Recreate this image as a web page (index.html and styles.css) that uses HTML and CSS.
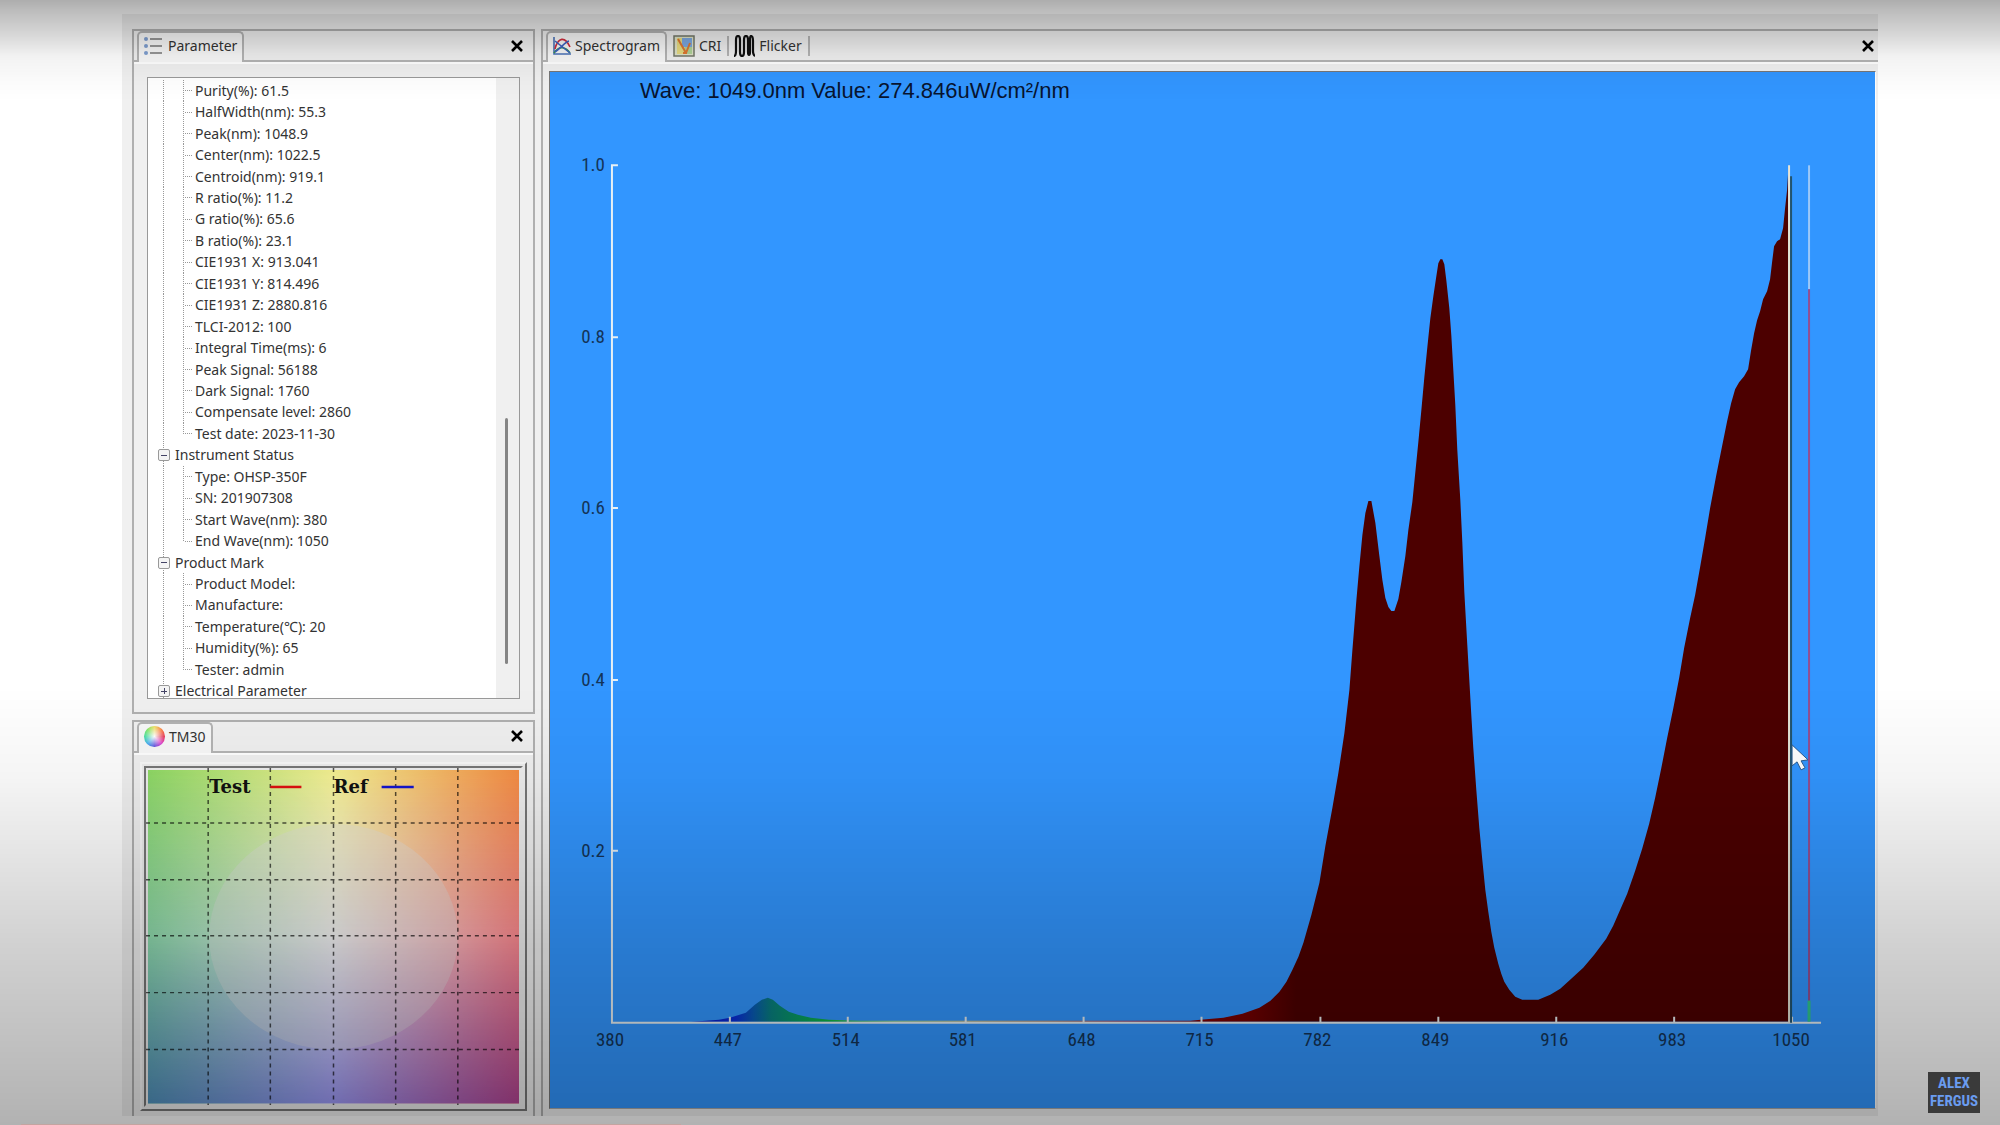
FILE: index.html
```html
<!DOCTYPE html>
<html lang="en">
<head>
    <meta charset="UTF-8">
    <meta name="viewport" content="width=device-width, initial-scale=1.0">
    <title>Spectrogram</title>
    <link rel="stylesheet" href="styles.css">
</head>
<body>
    <main class="window">
        <div class="sidebar">
            <section class="panel panel-parameter">
                <div class="tab-bar">
                    <button class="tab active" type="button">
                        <svg class="icon" width="18" height="18" viewBox="0 0 18 18">
                            <g fill="#7f9fd0"><circle cx="2" cy="2" r="2"/><circle cx="2" cy="9" r="2"/><circle cx="2" cy="16" r="2"/></g>
                            <path d="M6 2h12M6 9h12M6 16h12" stroke="#777" stroke-width="1.5"/>
                        </svg>
                        Parameter
                    </button>
                    <button class="close" type="button" aria-label="Close">
                        <svg width="12" height="12" viewBox="0 0 12 12"><path d="M1 1l10 10M11 1L1 11" stroke="#000" stroke-width="2.6"/></svg>
                    </button>
                </div>
                <div class="tree-box">
                    <ul class="tree">
                        <li class="leaf">Purity(%): 61.5</li>
                        <li class="leaf">HalfWidth(nm): 55.3</li>
                        <li class="leaf">Peak(nm): 1048.9</li>
                        <li class="leaf">Center(nm): 1022.5</li>
                        <li class="leaf">Centroid(nm): 919.1</li>
                        <li class="leaf">R ratio(%): 11.2</li>
                        <li class="leaf">G ratio(%): 65.6</li>
                        <li class="leaf">B ratio(%): 23.1</li>
                        <li class="leaf">CIE1931 X: 913.041</li>
                        <li class="leaf">CIE1931 Y: 814.496</li>
                        <li class="leaf">CIE1931 Z: 2880.816</li>
                        <li class="leaf">TLCI-2012: 100</li>
                        <li class="leaf">Integral Time(ms): 6</li>
                        <li class="leaf">Peak Signal: 56188</li>
                        <li class="leaf">Dark Signal: 1760</li>
                        <li class="leaf">Compensate level: 2860</li>
                        <li class="leaf last">Test date: 2023-11-30</li>
                        <li class="branch"><button class="toggle" type="button" aria-label="Collapse"></button>Instrument Status</li>
                        <li class="leaf">Type: OHSP-350F</li>
                        <li class="leaf">SN: 201907308</li>
                        <li class="leaf">Start Wave(nm): 380</li>
                        <li class="leaf last">End Wave(nm): 1050</li>
                        <li class="branch"><button class="toggle" type="button" aria-label="Collapse"></button>Product Mark</li>
                        <li class="leaf">Product Model:</li>
                        <li class="leaf">Manufacture:</li>
                        <li class="leaf">Temperature(℃): 20</li>
                        <li class="leaf">Humidity(%): 65</li>
                        <li class="leaf last">Tester: admin</li>
                        <li class="branch"><button class="toggle plus" type="button" aria-label="Expand"></button>Electrical Parameter</li>
                    </ul>
                    <div class="scrollbar"><div class="thumb"></div></div>
                </div>
            </section>

            <section class="panel panel-tm30">
                <div class="tab-bar">
                    <button class="tab active" type="button">
                        <span class="wheel"></span>
                        TM30
                    </button>
                    <button class="close" type="button" aria-label="Close">
                        <svg width="12" height="12" viewBox="0 0 12 12"><path d="M1 1l10 10M11 1L1 11" stroke="#000" stroke-width="2.6"/></svg>
                    </button>
                </div>
                <div class="tm30-frame">
                    <svg class="tm30" viewBox="0 0 374 338" preserveAspectRatio="none">
                        <defs>
                            <linearGradient id="rowTop"><stop offset="0" stop-color="#8fd964"/><stop offset=".5" stop-color="#f6f290"/><stop offset="1" stop-color="#f68e42"/></linearGradient>
                            <linearGradient id="rowMid"><stop offset="0" stop-color="#8fdcae"/><stop offset=".5" stop-color="#ffffff"/><stop offset="1" stop-color="#ff8c92"/></linearGradient>
                            <linearGradient id="rowBottom"><stop offset="0" stop-color="#4f90bd"/><stop offset=".5" stop-color="#9c98f8"/><stop offset="1" stop-color="#b44494"/></linearGradient>
                            <linearGradient id="fadeDown" x2="0" y2="1"><stop offset="0" stop-color="#fff"/><stop offset=".5" stop-color="#000"/></linearGradient>
                            <linearGradient id="fadeUp" x2="0" y2="1"><stop offset=".5" stop-color="#000"/><stop offset="1" stop-color="#fff"/></linearGradient>
                            <mask id="topMask"><rect width="374" height="338" fill="url(#fadeDown)"/></mask>
                            <mask id="bottomMask"><rect width="374" height="338" fill="url(#fadeUp)"/></mask>
                        </defs>
                        <g>
                            <rect x="2" y="2" width="370" height="334" fill="url(#rowMid)"/>
                            <rect x="2" y="2" width="370" height="334" fill="url(#rowTop)" mask="url(#topMask)"/>
                            <rect x="2" y="2" width="370" height="334" fill="url(#rowBottom)" mask="url(#bottomMask)"/>
                        </g>
                        <ellipse cx="187" cy="169" rx="124" ry="113" fill="#e2e2e2" opacity=".35"/>
                        <path class="grid" d="M62 0V338M124 0V338M187 0V338M249 0V338M311 0V338M0 55H374M0 112H374M0 168H374M0 225H374M0 282H374"/>
                        <path d="M124 19h31" stroke="#e01010" stroke-width="2.5"/>
                        <path d="M235 19h32" stroke="#1414d0" stroke-width="2.5"/>
                        <text class="legend" x="63" y="25">Test</text>
                        <text class="legend" x="187" y="25">Ref</text>
                    </svg>
                </div>
            </section>
        </div>

        <section class="panel panel-spectrum">
            <div class="tab-bar">
                <button class="tab active" type="button">
                    <svg class="icon" width="18" height="18" viewBox="0 0 18 18" fill="none" stroke-width="1.6">
                        <path d="M1 0V17H18" stroke="#4a72b8"/>
                        <path d="M1 16C6 8 13 10 17 16" stroke="#3c9a4a"/>
                        <path d="M2 12C5 0 12-1 17 10" stroke="#d02c3c"/>
                        <path d="M2 4L17 16M2 15C9 10 12 5 16 4" stroke="#3c62c0"/>
                    </svg>
                    Spectrogram
                </button>
                <button class="tab" type="button">
                    <svg class="icon" width="22" height="22" viewBox="0 0 22 22">
                        <rect x="1" y="1" width="20" height="20" fill="#dfe3c8" stroke="#74786a" stroke-width="1.5"/>
                        <path d="M4 3h7v8h8v8H4Z" fill="#e8dc80"/>
                        <rect x="9" y="3" width="10" height="9" fill="#7ca8e0"/>
                        <path d="M12 12h7v7h-9Z" fill="#b0d498"/>
                        <path d="M5 4l8 14M13 18l4-10M10 18h4" stroke="#e07830" stroke-width="2" fill="none"/>
                    </svg>
                    CRI
                </button>
                <button class="tab" type="button">
                    <svg class="icon" width="22" height="22" viewBox="0 0 22 22">
                        <path d="M1 21Q3 21 3 16V5Q3 1 5 1T7 5V17Q7 21 9 21T11 17V5Q11 1 13 1T15 5V17Q15 20 16 20T17 17V5Q17 1 18 1Q20 1 20 6V16Q20 20 22 21" fill="none" stroke="#111" stroke-width="2.2"/>
                    </svg>
                    Flicker
                </button>
                <button class="close" type="button" aria-label="Close">
                    <svg width="12" height="12" viewBox="0 0 12 12"><path d="M1 1l10 10M11 1L1 11" stroke="#000" stroke-width="2.6"/></svg>
                </button>
            </div>
            <div class="chart-frame">
                <svg class="chart" viewBox="549 72 1326 1036">
                    <defs>
                        <linearGradient id="spectrum" gradientUnits="userSpaceOnUse" x1="611" y1="0" x2="1791" y2="0">
                            <stop offset=".08" stop-color="#0a1ec8"/>
                            <stop offset=".105" stop-color="#0a30d8"/>
                            <stop offset=".12" stop-color="#0a5cb4"/>
                            <stop offset=".135" stop-color="#088080"/>
                            <stop offset=".16" stop-color="#08a060"/>
                            <stop offset=".185" stop-color="#10b840"/>
                            <stop offset=".24" stop-color="#a0d878"/>
                            <stop offset=".3" stop-color="#d8c070"/>
                            <stop offset=".37" stop-color="#d08850"/>
                            <stop offset=".44" stop-color="#a83050"/>
                            <stop offset=".5" stop-color="#800000"/>
                            <stop offset=".54" stop-color="#740000"/>
                            <stop offset=".58" stop-color="#4c0000"/>
                        </linearGradient>
                    </defs>
                    <text class="readout" x="639" y="98">Wave: 1049.0nm Value: 274.846uW/cm²/nm</text>

                    <path fill="url(#spectrum)" d="M690 1022L705 1021 718 1020 729 1018 745 1013 754 1005 761 1000 767 998 772 1000 779 1006 788 1012 797 1015 810 1018 828 1020 860 1021 1190 1021
                        1200 1020 1223 1018 1242 1014 1259 1008 1270 1001 1279 992 1286 982 1292 970 1298 957 1303 943 1311 915 1319 883 1325 846 1332 808 1338 773 1344 733 1349 690 1352 650 1356 600
                        1359 566 1362 535 1365 513 1368 501 1371 501 1375 523 1379 556 1382 580 1385 598 1388 607 1391 611 1394 611 1398 599 1401 582 1405 556 1408 530 1412 502 1415 472 1418 442
                        1421 410 1424 377 1427 347 1430 318 1433 296 1436 276 1438 263 1440 259 1442 259 1444 264 1446 280 1449 308 1451 335 1453 370 1455 405 1457 450 1460 500 1462 542 1464 592
                        1467 645 1469 680 1471 715 1473 748 1476 790 1479 828 1482 860 1485 890 1488 912 1491 932 1494 948 1498 964 1501 974 1504 982 1509 990 1515 997 1522 1000 1538 1000
                        1550 995 1560 989 1571 979 1583 968 1594 955 1606 939 1613 926 1620 910 1627 894 1635 871 1642 849 1649 824 1655 798 1661 769 1667 738 1673 709 1679 678 1684 648
                        1690 618 1695 595 1700 567 1705 538 1710 508 1716 476 1722 446 1727 421 1731 403 1735 389 1739 382 1744 376 1748 369 1751 350 1754 333 1757 320 1760 311 1763 299 1767 291
                        1770 279 1772 262 1774 246 1777 241 1780 239 1783 228 1785 208 1787 190 1788 173V1022Z"/>

                    <g class="axis">
                        <path d="M617 165H611V1023H1821"/>
                        <path d="M611 337h6M611 508h6M611 680h6M611 851h6"/>
                        <path d="M729 1023v-6M847 1023v-6M965 1023v-6M1083 1023v-6M1201 1023v-6M1320 1023v-6M1438 1023v-6M1556 1023v-6M1674 1023v-6M1792 1023v-6"/>
                    </g>
                    <path d="M1789 165V1023" stroke="#e8e4d4" stroke-width="2"/>
                    <path d="M1791 176V1023" stroke="#24546c" stroke-width="2"/>
                    <path d="M1809 165V289" stroke="#9cc8f8" stroke-width="2"/>
                    <path d="M1809 289V1001" stroke="#944e90" stroke-width="2"/>
                    <path d="M1809 1001V1022" stroke="#30c890" stroke-width="3"/>

                    <g class="y-labels">
                        <text x="604" y="171">1.0</text>
                        <text x="604" y="343">0.8</text>
                        <text x="604" y="514">0.6</text>
                        <text x="604" y="686">0.4</text>
                        <text x="604" y="857">0.2</text>
                    </g>
                    <g class="x-labels">
                        <text x="609" y="1046">380</text>
                        <text x="727" y="1046">447</text>
                        <text x="845" y="1046">514</text>
                        <text x="962" y="1046">581</text>
                        <text x="1081" y="1046">648</text>
                        <text x="1199" y="1046">715</text>
                        <text x="1317" y="1046">782</text>
                        <text x="1435" y="1046">849</text>
                        <text x="1554" y="1046">916</text>
                        <text x="1672" y="1046">983</text>
                        <text x="1791" y="1046">1050</text>
                    </g>
                    <path d="M1792 745v21l5-4 4 8 4-2-4-7 7-1Z" fill="#fff" stroke="#2c5c90"/>
                </svg>
            </div>
        </section>
    </main>

    <div class="shade"></div>
    <div class="progress"></div>
    <div class="watermark">ALEX<br>FERGUS</div>
</body>
</html>
```
FILE: styles.css
```css
* {
    margin: 0;
    padding: 0;
    box-sizing: border-box;
}
body {
    height: 100vh;
    padding: 14px 122px 9px;
    background: #fff;
    color: #333;
    font-family: 'Noto Sans', 'Noto Sans CJK SC', sans-serif;
    font-size: 14px;
    overflow: hidden;
}
button {
    font: inherit;
    color: inherit;
    background: none;
    border: none;
}
.window {
    display: flex;
    gap: 6px;
    height: 100%;
    padding: 15px 0 0 10px;
    background: #f0f0f0;
}
.sidebar {
    display: flex;
    flex-direction: column;
    gap: 6px;
    width: 403px;
}
.panel {
    display: flex;
    flex-direction: column;
    border: 2px solid #b0b0b0;
}
.panel-parameter {
    flex: 685;
    min-height: 0;
}
.panel-tm30 {
    flex: 397;
    min-height: 0;
    border-bottom: none;
}
.panel-spectrum {
    flex: 1;
    min-width: 0;
    border-right: none;
    border-bottom: none;
}

/* tabs */
.tab-bar {
    display: flex;
    align-items: center;
    height: 31px;
    flex-shrink: 0;
    padding: 0 10px 0 3px;
    border-bottom: 2px solid #b4b4b4;
    box-shadow: 0 2px 0 #fff;
}
.tab {
    display: flex;
    align-items: center;
    gap: 4px;
    height: 20px;
    padding: 0 6px 0 4px;
    border-right: 2px solid #b4b4b4;
}
.tab.active {
    height: 31px;
    margin-bottom: -2px;
    padding: 0 5px 4px;
    background: #f8f8f8;
    border: 2px solid #b4b4b4;
    border-bottom: none;
    border-radius: 5px 5px 0 0;
}
.tab.active + .tab {
    padding-left: 6px;
}
.panel-parameter .tab {
    gap: 6px;
}
.wheel {
    width: 21px;
    height: 21px;
    border-radius: 50%;
    background: radial-gradient(#fff, transparent 70%), conic-gradient(#f0e060, #ff8040, #e83050, #e040d0, #6050e0, #40b0f0, #40e0a0, #80e860, #f0e060);
}
.close {
    display: flex;
    margin-left: auto;
}
.panel-spectrum .close {
    margin-right: -6px;
}

/* parameter tree */
.tree-box {
    display: flex;
    flex: 1;
    min-height: 0;
    margin: 15px 13px 13px;
    border: 1px solid #999;
    background: #fff;
    overflow: hidden;
}
.tree {
    --dots: repeating-linear-gradient(#999 0 1px, transparent 1px 2px);
    display: grid;
    grid-auto-rows: 1fr;
    flex: 1;
    height: 622px;
    margin-top: 2px;
    list-style: none;
}
.tree li {
    display: flex;
    align-items: center;
    line-height: 20px;
}
.leaf {
    padding-left: 47px;
    background:
        var(--dots) 15px 0 / 1px 100% no-repeat,
        var(--dots) 35px 0 / 1px 100% no-repeat,
        repeating-linear-gradient(90deg, #999 0 1px, transparent 1px 2px) 37px 50% / 8px 1px no-repeat;
}
.leaf.last {
    background-size: 1px 100%, 1px 50%, 8px 1px;
}
.branch {
    gap: 5px;
    padding-left: 10px;
    background: var(--dots) 15px 0 / 1px 100% no-repeat;
}
.toggle {
    width: 12px;
    height: 12px;
    border: 1px solid #999;
    border-radius: 2px;
    background: linear-gradient(#446 0 0) center / 6px 1px no-repeat, #f4f4f4;
}
.toggle.plus {
    background: linear-gradient(#446 0 0) center / 6px 1px no-repeat, linear-gradient(#446 0 0) center / 1px 6px no-repeat, #f4f4f4;
}
.scrollbar {
    width: 23px;
    padding: 340px 0 34px 9px;
    background: #f0f0f0;
}
.thumb {
    width: 3px;
    height: 100%;
    border-radius: 2px;
    background: #858585;
}

/* TM30 */
.tm30-frame {
    flex: 1;
    min-height: 0;
    margin: 9px 6px 5px;
    padding: 2px;
    border: 2px solid;
    border-color: #f8f8f8 #777 #777 #f8f8f8;
    background: #eee;
}
.tm30 {
    display: block;
    width: 100%;
    height: 100%;
    border: 2px solid;
    border-color: #777 #eee #eee #777;
}
.grid {
    fill: none;
    stroke: #000;
    stroke-opacity: .65;
    stroke-width: 1.5;
    stroke-dasharray: 4 4;
}
.legend {
    font: bold 18px 'DejaVu Serif', serif;
    fill: #111;
}

/* spectrum */
.chart-frame {
    flex: 1;
    min-height: 0;
    margin: 9px 2px 7px 6px;
    border: 1px solid #777;
    border-right-color: #fff;
    border-bottom-color: #aaa;
    background: #3296ff;
}
.chart {
    display: block;
    width: 100%;
    height: 100%;
}
.readout {
    font: 22px 'Liberation Sans', Arial, sans-serif;
    fill: #081430;
}
.axis {
    fill: none;
    stroke: #e8f0f4;
    stroke-width: 2;
}
.x-labels,
.y-labels {
    font: 19px 'Roboto Condensed', 'Roboto', sans-serif;
    fill: #143458;
}
.x-labels {
    text-anchor: middle;
}
.y-labels {
    text-anchor: end;
}

/* darkening at the top and bottom of the screen */
.shade {
    position: fixed;
    inset: 0;
    pointer-events: none;
    background: linear-gradient(rgba(0, 0, 0, .32) 0, rgba(0, 0, 0, .26) 1%, rgba(0, 0, 0, .16) 3%, rgba(0, 0, 0, .05) 5%, rgba(0, 0, 0, .02) 7%, transparent 9%, transparent 61%, rgba(0, 0, 0, .04) 69%, rgba(0, 0, 0, .18) 84%, rgba(0, 0, 0, .3) 100%);
}
.progress {
    position: fixed;
    left: 21px;
    bottom: 0;
    width: 33%;
    height: 1px;
    background: #c4a4a0;
}
.watermark {
    position: fixed;
    right: 20px;
    bottom: 12px;
    width: 52px;
    height: 41px;
    padding: 2px 0;
    background: #3a3a3a;
    color: #6a9cf0;
    font: bold 15px/18px 'Roboto Condensed', 'Roboto', sans-serif;
    text-align: center;
}
```
